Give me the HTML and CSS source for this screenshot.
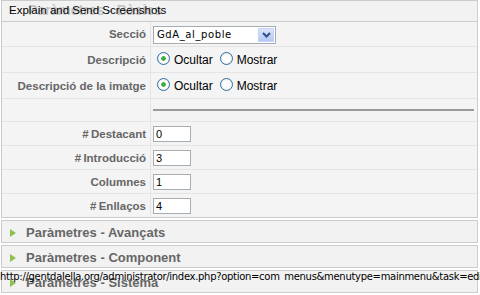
FILE: index.html
```html
<!DOCTYPE html>
<html>
<head>
<meta charset="utf-8">
<link rel="stylesheet" href="styles.css">
</head>
<body>
<div class="page">
  <div class="pane">
    <div class="pane-title">
      <span class="faded">Paràmetres - Bàsics</span>
      <span class="tip">Explain and Send Screenshots</span>
    </div>
    <table class="params">
      <tr class="r-sel">
        <td class="key">Secció</td>
        <td class="val">
          <div class="select"><span class="sel-text">GdA_al_poble</span><span class="sel-btn"><svg width="9" height="6" viewBox="0 0 9 6"><path d="M1 1 L4.5 4.5 L8 1" fill="none" stroke="#2d4f8a" stroke-width="2"/></svg></span></div>
        </td>
      </tr>
      <tr class="r-radio">
        <td class="key">Descripció</td>
        <td class="val">
          <span class="radio on"></span><span class="rlabel">Ocultar</span><span class="radio"></span><span class="rlabel">Mostrar</span>
        </td>
      </tr>
      <tr class="r-radio">
        <td class="key">Descripció de la imatge</td>
        <td class="val">
          <span class="radio on"></span><span class="rlabel">Ocultar</span><span class="radio"></span><span class="rlabel">Mostrar</span>
        </td>
      </tr>
      <tr class="r-hr">
        <td class="key"></td>
        <td class="val"><div class="hr"></div></td>
      </tr>
      <tr class="r-inp">
        <td class="key">#&thinsp;Destacant</td>
        <td class="val"><div class="inp">0</div></td>
      </tr>
      <tr class="r-inp">
        <td class="key">#&thinsp;Introducció</td>
        <td class="val"><div class="inp">3</div></td>
      </tr>
      <tr class="r-inp">
        <td class="key">Columnes</td>
        <td class="val"><div class="inp">1</div></td>
      </tr>
      <tr class="r-inp last">
        <td class="key">#&thinsp;Enllaços</td>
        <td class="val"><div class="inp">4</div></td>
      </tr>
    </table>
  </div>
  <div class="panel"><span class="arrow"></span>Paràmetres - Avançats</div>
  <div class="panel"><span class="arrow"></span>Paràmetres - Component</div>
  <div class="panel"><span class="arrow"></span>Paràmetres - Sistema</div>
  <div class="status">http://gentdalella.org/administrator/index.php?option=com_menus&amp;menutype=mainmenu&amp;task=edit</div>
</div>
</body>
</html>
```
FILE: styles.css
```css
html, body {
  margin: 0;
  padding: 0;
  background: #ffffff;
}
.page {
  position: relative;
  width: 480px;
  height: 295px;
  overflow: hidden;
  font-family: "Liberation Sans", Arial, sans-serif;
}
.pane {
  margin: 0 2px 0 1px;
  border: 1px solid #cccccc;
  background: #f4f4f4;
}
.pane-title {
  position: relative;
  height: 20px;
  border-bottom: 1px solid #cccccc;
  background: #f2f2f2;
}
.faded {
  position: absolute;
  left: 26px;
  top: 1px;
  font-size: 14px;
  font-weight: bold;
  color: #c2c2c2;
}
.tip {
  position: absolute;
  left: 7px;
  top: 3px;
  font-size: 11.5px;
  color: #000;
  font-family: "Liberation Sans", Arial, sans-serif;
}
.params {
  width: 100%;
  border-collapse: collapse;
}
.params td {
  border-bottom: 1px solid #e4e4e4;
  padding: 0;
}
.params tr.last td {
  border-bottom: none;
}
.key {
  width: 144px;
  text-align: right;
  padding-right: 4px !important;
  font-size: 11.5px;
  font-weight: bold;
  color: #666666;
  border-right: 1px solid #e4e4e4;
  white-space: nowrap;
}
.val {
  padding-left: 2px !important;
  font-size: 12px;
  color: #000;
}
.r-sel td { height: 24px; }
.r-radio td { height: 25px; }
.r-hr td { height: 22px; vertical-align: top; }
.r-inp td { height: 23px; }
.select {
  display: flex;
  align-items: center;
  width: 121px;
  height: 16px;
  border: 1px solid #a5acb2;
  background: #fff;
  margin-top: 1px;
}
.sel-text {
  flex: 1;
  padding-left: 3px;
  font-family: "DejaVu Sans", sans-serif;
  font-size: 10px;
  letter-spacing: 0.6px;
  color: #000;
}
.sel-btn {
  width: 16px;
  height: 14px;
  margin-right: 1px;
  background: linear-gradient(#dce6fb, #b4c8f2);
  border: 1px solid #c3d3fd;
  box-sizing: border-box;
  display: flex;
  align-items: center;
  justify-content: center;
}
.radio {
  display: inline-block;
  width: 11px;
  height: 11px;
  border: 1px solid #2f6fa8;
  border-radius: 50%;
  background: radial-gradient(circle, #ffffff 40%, #dcdcd6 100%);
  vertical-align: middle;
  margin-left: 4px;
  margin-right: 4px;
  position: relative;
  top: -1px;
}
.radio.on {
  background: radial-gradient(circle, #3fae3f 0, #3fae3f 2px, #ffffff 2.6px, #ffffff 45%, #dcdcd6 100%);
}
.rlabel {
  vertical-align: middle;
  margin-right: 3px;
}
.hr {
  height: 0;
  border-top: 2px solid #9a9a9a;
  margin: 10px 3px 0 0;
}
.inp {
  width: 34px;
  height: 14px;
  border: 1px solid #a5acb2;
  background: #fff;
  font-size: 11px;
  line-height: 14px;
  padding-left: 2px;
}
.panel {
  position: relative;
  margin: 2px 2px 0 1px;
  height: 19px;
  padding-top: 2px;
  border: 1px solid #cccccc;
  background: #f2f2f2;
  font-size: 13px;
  font-weight: bold;
  color: #666666;
  line-height: 20px;
  padding-left: 24px;
}
.arrow {
  position: absolute;
  left: 8px;
  top: 8px;
  width: 0;
  height: 0;
  border-top: 4px solid transparent;
  border-bottom: 4px solid transparent;
  border-left: 6px solid #8cc152;
}
.status {
  position: absolute;
  left: 0;
  top: 271px;
  width: 480px;
  white-space: nowrap;
  overflow: hidden;
  font-family: "DejaVu Sans", sans-serif;
  font-size: 10px;
  letter-spacing: -0.3px;
  color: #000;
}
```
